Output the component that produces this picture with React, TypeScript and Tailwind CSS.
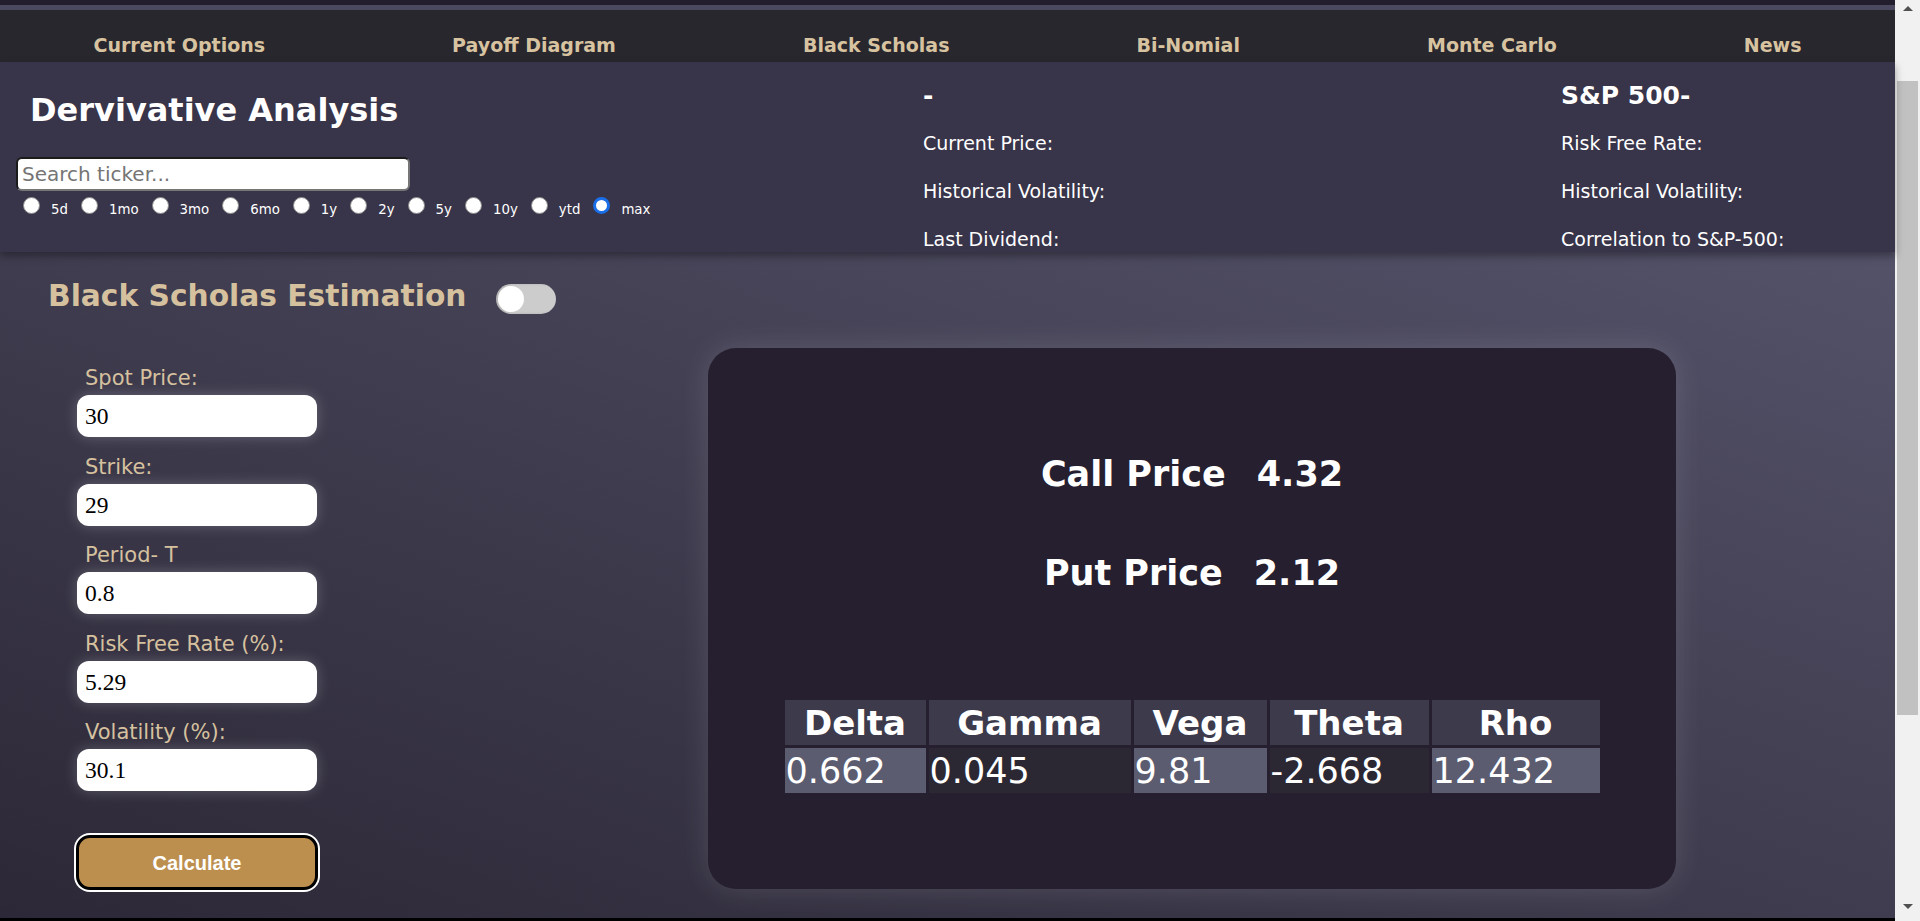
import React from "react";

const navItems = ["Current Options", "Payoff Diagram", "Black Scholas", "Bi-Nomial", "Monte Carlo", "News"];
const periods = ["5d", "1mo", "3mo", "6mo", "1y", "2y", "5y", "10y", "ytd", "max"];
const fields = [
  { label: "Spot Price:", value: "30" },
  { label: "Strike:", value: "29" },
  { label: "Period- T", value: "0.8" },
  { label: "Risk Free Rate (%):", value: "5.29" },
  { label: "Volatility (%):", value: "30.1" },
];
const greeks = [
  { name: "Delta", value: "0.662", light: true },
  { name: "Gamma", value: "0.045", light: false },
  { name: "Vega", value: "9.81", light: true },
  { name: "Theta", value: "-2.668", light: false },
  { name: "Rho", value: "12.432", light: true },
];

export default function App() {
  return (
    <div className="flex h-[921px] w-[1920px] overflow-hidden bg-black font-['DejaVu_Sans',sans-serif]">
      <div className="flex w-[1895px] flex-col">
        <div className="h-[5px] bg-[#221e2e]" />
        <div className="h-[5px] bg-[#4a4960]" />
        <nav className="flex h-[52px] items-start justify-around bg-[#28272e] pt-[24px]">
          {navItems.map((n) => (
            <span key={n} className="text-[19px] font-bold leading-[22px] text-[#d8c3a0]">
              {n}
            </span>
          ))}
        </nav>
        <header className="relative z-10 flex h-[190px] bg-[#383449] shadow-[0_4px_8px_rgba(0,0,0,0.35)]">
          <div className="w-[923px] pl-[16px]">
            <div className="mt-[32px] pl-[14px] text-[32px] font-bold leading-[32px] text-white">Dervivative Analysis</div>
            <div className="mt-[31px] flex h-[34px] w-[394px] items-center rounded-[6px] border-2 border-b-[#767676] border-l-[#1b1b1b] border-r-[#767676] border-t-[#1b1b1b] bg-white pl-[4px]">
              <span className="text-[20px] leading-[24px] text-[#757575]">Search ticker...</span>
            </div>
            <div className="mt-[6px] flex items-start pl-[7px]">
              {periods.map((p) => (
                <div key={p} className="mr-[13px] flex items-start">
                  {p === "max" ? (
                    <span className="h-[17px] w-[17px] rounded-full border-[3px] border-[#1a6fe8] bg-white" />
                  ) : (
                    <span className="h-[17px] w-[17px] rounded-full border border-[#8a8a8a] bg-white" />
                  )}
                  <span className="ml-[11px] mt-[6px] text-[13.33px] leading-[13px] text-white">{p}</span>
                </div>
              ))}
            </div>
          </div>
          <div className="flex w-[638px] flex-col gap-[17px] pt-[18px] text-white">
            <div className="text-[25px] font-bold leading-[31px]">-</div>
            <div className="text-[19px] leading-[31px]">Current Price:</div>
            <div className="text-[19px] leading-[31px]">Historical Volatility:</div>
            <div className="text-[19px] leading-[31px]">Last Dividend:</div>
          </div>
          <div className="flex flex-1 flex-col gap-[17px] pt-[18px] text-white">
            <div className="text-[25px] font-bold leading-[31px]">S&amp;P 500-</div>
            <div className="text-[19px] leading-[31px]">Risk Free Rate:</div>
            <div className="text-[19px] leading-[31px]">Historical Volatility:</div>
            <div className="text-[19px] leading-[31px]">Correlation to S&amp;P-500:</div>
          </div>
        </header>
        <main className="h-[666px] bg-linear-to-bl from-[#545269] to-[#2c2837] pl-[48px] pt-[26px]">
          <div className="flex h-[36px] items-start">
            <span className="text-[29.7px] font-bold leading-[36px] text-[#d6c19f]">Black Scholas Estimation</span>
            <div className="ml-[30px] mt-[6px] flex h-[30px] w-[60px] items-center rounded-full bg-[#cccccc] pl-[2px] shadow-[inset_2px_0_3px_rgba(0,0,0,0.15)]">
              <span className="h-[26px] w-[26px] rounded-full bg-white" />
            </div>
          </div>
          <div className="mt-[34px] flex items-start">
            <div className="ml-[26px] flex w-[246px] flex-col">
              {fields.map((f, i) => (
                <div key={f.label} className={i === 0 ? "flex flex-col pt-[17px]" : "flex flex-col pt-[16.5px]"}>
                  <span className="pl-[11px] text-[21px] leading-[26px] text-[#d6c19f]">{f.label}</span>
                  <div className="ml-[3px] mt-[4px] flex h-[42px] w-[240px] items-center rounded-[12px] bg-white pl-[8px] shadow-[0_0_14px_rgba(255,255,255,0.22)]">
                    <span className="font-['Liberation_Serif',serif] text-[23.5px] leading-[28px] text-black">{f.value}</span>
                  </div>
                </div>
              ))}
              <button className="ml-[2px] mt-[44px] flex h-[55px] w-[242px] items-center justify-center rounded-[14px] border-[3px] border-black bg-[#bd8f4f] font-['Liberation_Sans',sans-serif] text-[20px] font-bold text-white ring-2 ring-white">
                Calculate
              </button>
            </div>
            <div className="ml-[388px] flex h-[541px] w-[968px] flex-col items-center rounded-[28px] bg-[#251f2f] pt-[106px] text-white shadow-[0_0_30px_rgba(255,255,255,0.13)]">
              <div className="flex gap-[31px] text-[35px] font-bold leading-[40px]">
                <span>Call Price</span>
                <span>4.32</span>
              </div>
              <div className="mt-[59px] flex gap-[31px] text-[35px] font-bold leading-[40px]">
                <span>Put Price</span>
                <span>2.12</span>
              </div>
              <div className="mt-[107px] grid grid-cols-[141px_202px_133px_159px_168px] gap-[3px]">
                {greeks.map((g) => (
                  <div key={g.name} className="flex h-[45px] items-center justify-center bg-[#3d3a4b] text-[34px] font-bold leading-[40px]">
                    {g.name}
                  </div>
                ))}
                {greeks.map((g) => (
                  <div
                    key={g.name + "v"}
                    className={
                      g.light
                        ? "flex h-[45px] items-center bg-[#5b5c70] pl-[1px] text-[35px] leading-[40px]"
                        : "flex h-[45px] items-center bg-[#2b2833] pl-[1px] text-[35px] leading-[40px]"
                    }
                  >
                    {g.value}
                  </div>
                ))}
              </div>
            </div>
          </div>
        </main>
        <div className="h-[3px] bg-black" />
      </div>
      <div className="relative w-[25px] bg-[#f1f1f1] pt-[81px]">
        <div className="absolute left-1/2 top-[6px] h-0 w-0 -translate-x-1/2 border-x-[5px] border-b-[5px] border-x-transparent border-b-[#505050]" />
        <div className="mx-[2px] h-[634px] bg-[#c1c1c1]" />
        <div className="absolute bottom-[12px] left-1/2 h-0 w-0 -translate-x-1/2 border-x-[5px] border-t-[5px] border-x-transparent border-t-[#505050]" />
      </div>
    </div>
  );
}
